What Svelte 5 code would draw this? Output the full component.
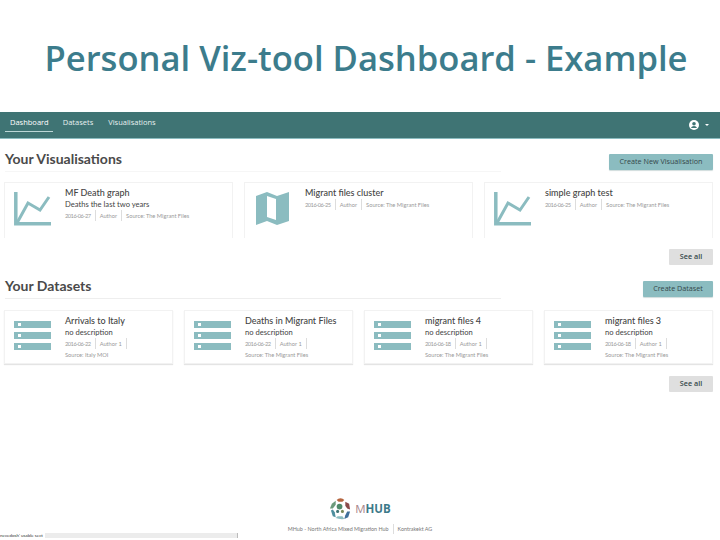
<script>
  const vis = [
    { title: 'MF Death graph', desc: 'Deaths the last two years', date: '2016-06-27', source: 'Source: The Migrant Files', icon: 'chart' },
    { title: 'Migrant files cluster', date: '2016-06-25', source: 'Source: The Migrant Files', icon: 'map' },
    { title: 'simple graph test', date: '2016-06-25', source: 'Source: The Migrant Files', icon: 'chart' }
  ];
  const data = [
    { title: 'Arrivals to Italy', date: '2016-06-22', source: 'Source: Italy MOI' },
    { title: 'Deaths in Migrant Files', date: '2016-06-22', source: 'Source: The Migrant Files' },
    { title: 'migrant files 4', date: '2016-06-18', source: 'Source: The Migrant Files' },
    { title: 'migrant files 3', date: '2016-06-18', source: 'Source: The Migrant Files' }
  ];
</script>

<div class="page">
  <h1>Personal Viz-tool Dashboard - Example</h1>

  <nav>
    <span class="tab active">Dashboard</span>
    <span class="tab">Datasets</span>
    <span class="tab">Visualisations</span>
    <span class="user">
      <svg width="10" height="10" viewBox="0 0 10 10"><circle cx="5" cy="5" r="5" fill="#fff"/><circle cx="5" cy="3.8" r="1.8" fill="#3f7474"/><path d="M1.9 8a3.4 3.4 0 0 1 6.2 0z" fill="#3f7474"/></svg>
      <i class="caret"></i>
    </span>
  </nav>

  <section class="vis">
    <div class="head">
      <h2>Your Visualisations</h2>
      <button class="primary">Create New Visualisation</button>
    </div>
    <div class="cards three">
      {#each vis as c}
        <article class="card open">
          <div class="icon">
            {#if c.icon === 'chart'}
              <svg width="37" height="34" viewBox="0 0 37 34" fill="none" stroke="#8bbcc0">
                <path d="M1.8 0V31.8H37" stroke-width="3.5"/>
                <path d="M3 31L14 11L26 18L35 5" stroke-width="3"/>
              </svg>
            {:else}
              <svg class="map" width="33" height="33" viewBox="0 0 33 33">
                <path fill="#8bbcc0" fill-rule="evenodd" d="M0 4L11 0L21 4L33 0V29L21 33L11 29L0 33zM11 4V25L20 28V7z"/>
              </svg>
            {/if}
          </div>
          <div class="body">
            <h3>{c.title}</h3>
            {#if c.desc}<p class="desc">{c.desc}</p>{/if}
            <div class="meta"><span class="date">{c.date}</span><span>Author</span><span>{c.source}</span></div>
          </div>
        </article>
      {/each}
    </div>
    <div class="more"><button class="grey">See all</button></div>
  </section>

  <section class="sets">
    <div class="head">
      <h2>Your Datasets</h2>
      <button class="primary">Create Dataset</button>
    </div>
    <div class="cards four">
      {#each data as c}
        <article class="card">
          <div class="icon">
            <div class="stack">
              <b></b><b></b><b></b>
            </div>
          </div>
          <div class="body">
            <h3>{c.title}</h3>
            <p class="desc">no description</p>
            <div class="meta"><span class="date">{c.date}</span><span>Author 1</span></div>
            <div class="meta">{c.source}</div>
          </div>
        </article>
      {/each}
    </div>
    <div class="more"><button class="grey">See all</button></div>
  </section>

  <footer>
    <div class="logo">
      <svg width="23" height="23" viewBox="0 0 24 24">
        <path d="M8 3a5 4 0 0 1 8 0l-2 2h-4z" fill="#b5653f"/>
        <path d="M17 5l4 2 1 6-3-1-2-3z" fill="#8a4a4a"/>
        <path d="M22 15l-2 6-4 2 1-4 2-4z" fill="#3f6f9a"/>
        <path d="M7 22a9 3 0 0 0 9 1l-2-3h-5z" fill="#8bbcc0"/>
        <path d="M2 14l2 6 3 1-1-5-2-3z" fill="#4f8f9f"/>
        <path d="M1 12l2-5 4-3 0 4-3 4z" fill="#6b9a7a"/>
        <circle cx="11" cy="10" r="3" fill="#4f8a6a"/>
        <circle cx="14" cy="15" r="1.6" fill="#7a8a5a"/>
        <circle cx="9" cy="15" r="1.6" fill="#3f7474"/>
      </svg>
      <span class="mark"><em>M</em>HUB</span>
    </div>
    <p class="credit"><span>MHub - North Africa Mixed Migration Hub</span><span>Kontrakekt AG</span></p>
  </footer>

  <div class="scrollbar">
    <span>nevedosh' usable sect</span>
    <div class="track"></div>
  </div>
</div>

<style>
  :global(body) { margin: 0; background: #fff; }
  .page {
    width: 720px; height: 540px; overflow: hidden; position: relative;
    font-family: Lato, "Open Sans", sans-serif; color: #444;
  }
  h1 {
    margin: 0; height: 112px; box-sizing: border-box; padding: 36px 0 0 12px;
    text-align: center; font-size: 34.6px; line-height: 44px; font-weight: 600;
    color: #3c7c8c; white-space: nowrap;
    font-family: "Open Sans", sans-serif;
  }
  nav {
    height: 27px; box-sizing: border-box; background: #3f7474; border-bottom: 1px solid #8bbcc0;
    display: flex; padding: 0 5px; align-items: stretch; color: #e6f0f0; font-size: 7.5px;
    font-family: "Open Sans", sans-serif;
  }
  .tab { padding: 5px 5px 0; margin-right: 5px; }
  .tab.active { border-bottom: 1px solid #bcd6d6; margin-bottom: 6px; padding-right: 4px; color: #fff; }
  .user { margin-left: auto; display: flex; align-items: center; gap: 6px; padding-right: 6px; }
  .caret { width: 0; height: 0; border: 2px solid transparent; border-top-color: #fff; border-bottom: 0; }

  section { padding: 0 7px 0 0; }
  .head { display: flex; justify-content: space-between; align-items: flex-start; height: 28px; }
  .vis .head { padding-top: 12px; height: 32px; }
  h2 {
    margin: -4px 0 0 5px; font-size: 14px; font-weight: 700; line-height: 18px; color: #4a4a4a;
    width: 496px; box-sizing: border-box; border-bottom: 1px solid #eee; height: 22px;
  }
  .vis h2 { border-bottom-color: #f6f6f6; margin-top: -1px; }
  button {
    border: 0; border-radius: 1px; font: 7.2px/1 "Open Sans", sans-serif; color: #35474a; height: 16px; padding: 0;
  }
  .primary { background: #8bbcc0; box-shadow: 0 1px 1px #d0dcdc; }
  .vis .primary { width: 104px; margin-top: 3px; }
  .sets .primary { width: 70px; }
  .grey { background: #dfdfdf; width: 44px; font-weight: 600; }

  .cards { display: grid; margin-left: 4px; }
  .cards.three { grid-template-columns: repeat(3, 229px); column-gap: 11px; margin-top: -1px; }
  .cards.four { grid-template-columns: repeat(4, 169px); column-gap: 11px; margin-top: 1px; }
  .card {
    display: flex; box-sizing: border-box; background: #fff;
    border: 1px solid #f2f2f2; box-shadow: 0 1px 1px #e4e4e4; height: 54px;
  }
  .card.open { border-bottom: 0; box-shadow: none; height: 56px; }
  .icon { width: 60px; flex: none; padding: 9px 0 0 9px; box-sizing: border-box; }
  .icon svg { display: block; }
  .icon .map { margin-left: 2px; }
  .body { padding-top: 4px; min-width: 0; }
  h3 { margin: 0; font-size: 9px; line-height: 12px; font-weight: 500; color: #444; white-space: nowrap; }
  .desc { margin: 0; font-size: 7.6px; line-height: 11px; color: #444; white-space: nowrap; }
  .meta { display: flex; font-size: 5.7px; line-height: 11px; color: #999; white-space: nowrap; }
  .meta span { padding: 0 4px; border-right: 1px solid #ddd; }
  .meta span:first-child { padding-left: 0; }
  .meta span:last-child { border-right: 0; }
  .meta .date { letter-spacing: -0.5px; }
  .four .meta span:last-child { border-right: 1px solid #ddd; }

  .stack { display: flex; flex-direction: column; gap: 4px; width: 37px; padding-top: 1px; }
  .stack b { display: block; height: 7px; background: #8bbcc0; position: relative; }
  .stack b::after { content: ""; position: absolute; left: 4px; top: 2px; width: 3px; height: 3px; background: #fff; }

  .more { display: flex; justify-content: flex-end; padding-top: 11px; height: 16px; }
  .sets .more { padding-top: 12px; }
  .sets { padding-top: 16px; }

  footer { position: absolute; left: 0; right: 0; top: 497px; display: flex; flex-direction: column; align-items: center; }
  .logo { display: flex; align-items: center; gap: 3px; }
  .mark { font: 700 11.5px/1 "Open Sans", sans-serif; color: #3d7a8a; }
  .mark em { font-style: normal; font-weight: 400; color: #a8858a; }
  .credit { margin: 4px 0 0; display: flex; font-size: 5.4px; line-height: 10px; color: #777; white-space: nowrap; }
  .credit span + span { border-left: 1px solid #ddd; margin-left: 4px; padding-left: 4px; }

  .scrollbar { position: absolute; left: 0; top: 533px; width: 238px; height: 5px; display: flex; align-items: center; font-size: 4.5px; color: #333; overflow: hidden; white-space: nowrap; }
  .scrollbar span { width: 45px; flex: none; }
  .track { flex: 1; height: 5px; background: #ececec; border-right: 1px solid #bbb; }
</style>
